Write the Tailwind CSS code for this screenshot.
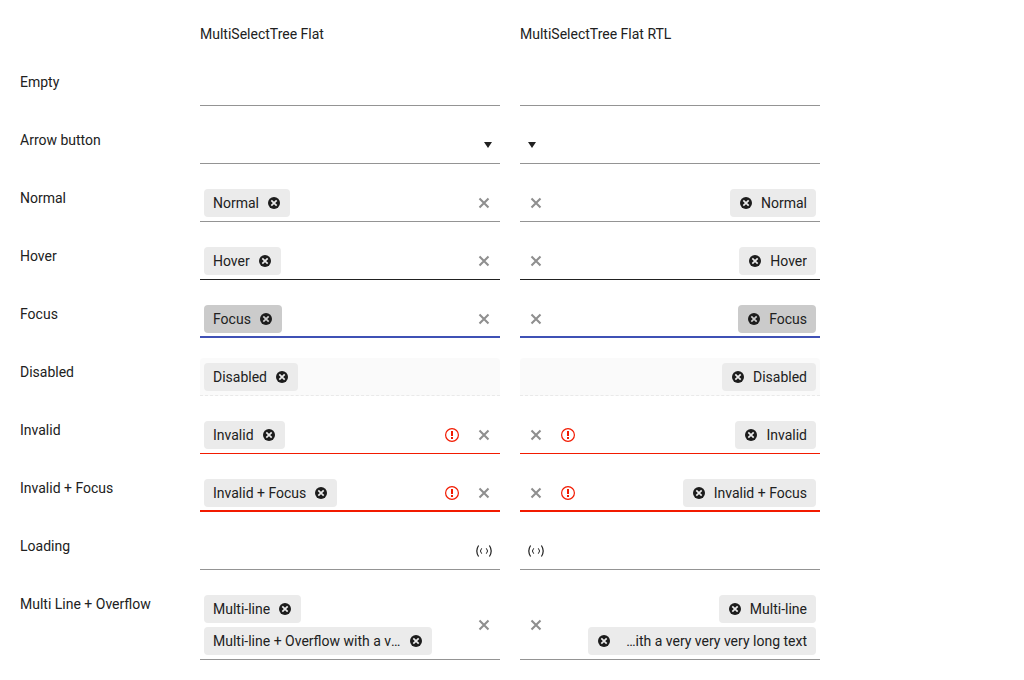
<!DOCTYPE html>
<html lang="en">
<head>
<meta charset="utf-8">
<meta name="viewport" content="width=device-width, initial-scale=1">
<title>MultiSelectTree Flat</title>
<script src="https://cdn.jsdelivr.net/npm/@tailwindcss/browser@4"></script>
</head>
<body class="bg-white font-[Roboto,sans-serif] text-sm leading-5 text-[#212121]">
<svg class="hidden" aria-hidden="true">
  <symbol id="remove" viewBox="0 0 12 12">
    <circle cx="6" cy="6" r="6" fill="#1c1c1c"/>
    <path d="M3.3 3.3l5.4 5.4M8.7 3.3L3.3 8.7" fill="none" stroke="currentColor" stroke-width="1.7"/>
  </symbol>
  <symbol id="clear" viewBox="0 0 12 12">
    <path d="M1.5 1.5l9 9M10.5 1.5l-9 9" fill="none" stroke="currentColor" stroke-width="2.1"/>
  </symbol>
  <symbol id="arrow" viewBox="0 0 8 6">
    <path d="M0 0h8L4 6z" fill="currentColor"/>
  </symbol>
  <symbol id="invalid" viewBox="0 0 14 14">
    <circle cx="7" cy="7" r="6.4" fill="none" stroke="currentColor" stroke-width="1.2"/>
    <path d="M6 3h2v5H6zM6 9h2v2H6z" fill="currentColor"/>
  </symbol>
  <symbol id="loading" viewBox="0 0 16 12">
    <path d="M2.6.5Q-1 6 2.6 11.5M13.4.5Q17 6 13.4 11.5" fill="none" stroke="currentColor" stroke-width="1.2"/>
    <path d="M5.7 3.3Q3.1 6 5.7 8.7M10.3 3.3Q12.9 6 10.3 8.7" fill="none" stroke="currentColor" stroke-width="1"/>
  </symbol>
</svg>
<main id="grid" class="grid grid-cols-[160px_300px_300px] gap-5 p-5">
  <h2 class="col-start-2 py-1">MultiSelectTree Flat</h2>
  <h2 class="py-1">MultiSelectTree Flat RTL</h2>
</main>
<script>
const lines = {
  normal: 'border-[#949494]',
  hover: 'border-[#212121]',
  focus: 'border-[#3f51b5] shadow-[inset_0_-1px_0_#3f51b5]',
  disabled: 'border-dashed border-[#e9e9e9] bg-[#fafafa] rounded-t',
  invalid: 'border-[#f21a00]',
  invalidFocus: 'border-[#f21a00] shadow-[inset_0_-1px_0_#f21a00]',
};
const rows = [
  { label: 'Empty', line: 'normal' },
  { label: 'Arrow button', line: 'normal', arrow: true },
  { label: 'Normal', line: 'normal', chips: ['Normal'], clear: true },
  { label: 'Hover', line: 'hover', chips: ['Hover'], clear: true },
  { label: 'Focus', line: 'focus', chips: ['Focus'], clear: true, active: true },
  { label: 'Disabled', line: 'disabled', chips: ['Disabled'], disabled: true },
  { label: 'Invalid', line: 'invalid', chips: ['Invalid'], clear: true, error: true },
  { label: 'Invalid + Focus', line: 'invalidFocus', chips: ['Invalid + Focus'], clear: true, error: true },
  { label: 'Loading', line: 'normal', loading: true },
  { label: 'Multi Line + Overflow', line: 'normal', clear: true,
    chips: ['Multi-line', 'Multi-line + Overflow with a very very very long text'] },
];
const chip = (text, row) => `
  <li class="flex h-7 max-w-[228px] items-center rounded ps-[9px] ${row.active ? 'bg-[#cbcbcb]' : 'bg-[#ebebeb]'}">
    <span class="truncate">${text}</span>
    <button type="button" aria-label="Remove ${text}" ${row.disabled ? 'disabled' : ''} class="flex w-[31px] shrink-0 justify-end pe-[10px] ${row.active ? 'text-[#cbcbcb]' : 'text-[#ebebeb]'}"><svg class="h-3 w-3"><use href="#remove"/></svg></button>
  </li>`;
const field = (row, id, dir) => `
  <div dir="${dir}" class="flex min-h-[38px] items-center border-b pt-[5px] pb-1 ${lines[row.line]}">
    <div class="flex min-w-0 flex-1 ps-1">
      ${row.chips ? `<ul class="flex min-w-0 flex-wrap gap-1">${row.chips.map(c => chip(c, row)).join('')}</ul>` : ''}
      <input id="${id}" type="text" ${row.disabled ? 'disabled' : ''} class="h-7 w-0 min-w-0 flex-1 bg-transparent outline-none">
    </div>
    ${row.error ? '<span role="img" aria-label="Invalid value" class="flex w-8 justify-center text-[#f21a00]"><svg class="size-3.5"><use href="#invalid"/></svg></span>' : ''}
    ${row.clear ? '<button type="button" aria-label="Clear" class="flex w-8 justify-center text-[#8f8f8f]"><svg class="h-3 w-3"><use href="#clear"/></svg></button>' : ''}
    ${row.arrow ? '<button type="button" aria-label="Open" class="flex w-6 justify-center"><svg class="h-1.5 w-2"><use href="#arrow"/></svg></button>' : ''}
    ${row.loading ? '<span role="img" aria-label="Loading" class="flex w-8 justify-center"><svg class="h-3 w-4"><use href="#loading"/></svg></span>' : ''}
  </div>`;
document.getElementById('grid').insertAdjacentHTML('beforeend', rows.map((row, i) => `
  <label for="ltr-${i}" class="py-1">${row.label}</label>
  ${field(row, 'ltr-' + i, 'ltr')}
  ${field(row, 'rtl-' + i, 'rtl')}`).join(''));
document.querySelectorAll('input[id^="rtl-"]').forEach((el, i) => el.setAttribute('aria-label', rows[i].label + ' RTL'));
</script>
</body>
</html>
